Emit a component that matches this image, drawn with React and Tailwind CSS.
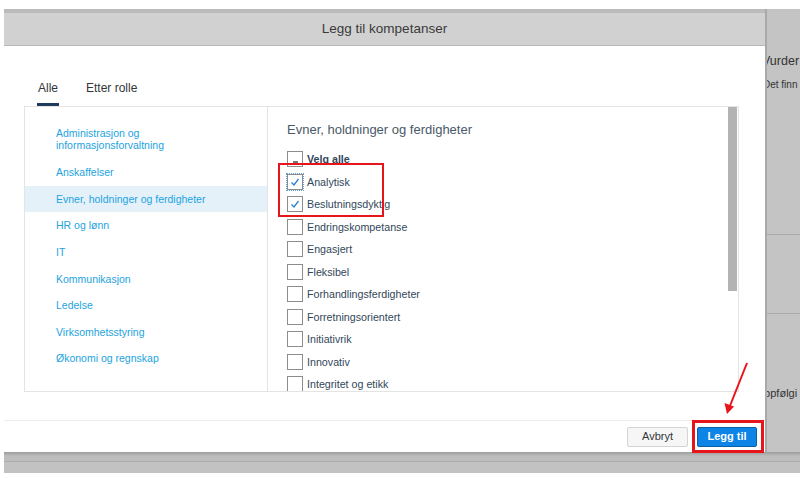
import React from "react";

const categories = [
  { label: ["Administrasjon og", "informasjonsforvaltning"] },
  { label: ["Anskaffelser"] },
  { label: ["Evner, holdninger og ferdigheter"], active: true },
  { label: ["HR og lønn"] },
  { label: ["IT"] },
  { label: ["Kommunikasjon"] },
  { label: ["Ledelse"] },
  { label: ["Virksomhetsstyring"] },
  { label: ["Økonomi og regnskap"] },
];

const skills = [
  { name: "Analytisk", checked: true, focus: true },
  { name: "Beslutningsdyktig", checked: true },
  { name: "Endringskompetanse" },
  { name: "Engasjert" },
  { name: "Fleksibel" },
  { name: "Forhandlingsferdigheter" },
  { name: "Forretningsorientert" },
  { name: "Initiativrik" },
  { name: "Innovativ" },
  { name: "Integritet og etikk" },
];

const Checkbox = ({ checked, focus, partial }) => (
  <div
    className={
      "w-[16px] h-[16px] shrink-0 border-[1.5px] border-[#8c8c8c] bg-white flex items-center justify-center " +
      (focus ? "outline-1 outline-dotted outline-[#5ea3dc]" : "")
    }
  >
    {checked && (
      <svg width="10" height="10" viewBox="0 0 10 10">
        <polyline points="1.5,5.5 4,8 8.5,2" fill="none" stroke="#2b7fd0" strokeWidth="1.3" />
      </svg>
    )}
    {partial && <div className="w-[5px] h-[1.5px] bg-[#777] mt-[5px]" />}
  </div>
);

export default function App() {
  return (
    <div className="w-[800px] h-[478px] bg-white relative overflow-hidden font-['Liberation_Sans',Arial,sans-serif]">
      <div className="ml-[4px] mt-[9px] h-[464px] bg-[#c4c4c4] flex flex-col">
        <div className="flex h-[443px]">
          {/* dialog */}
          <div className="w-[761px] flex flex-col">
            <div className="h-[4px] bg-[#bbbbbb]" />
            <div className="h-[439px] bg-white flex flex-col">
              <div className="h-[33px] bg-[#d1d1d1] border-b border-[#b8b8b8] flex items-center justify-center text-[13.5px] text-[#3a3a3a]">
                Legg til kompetanser
              </div>
              <div className="flex pl-[33px] pt-[34px] gap-[27px] text-[12px] leading-[16px] text-[#32363a]">
                <div className="pb-[7px] border-b-[3px] border-[#1e3a5c] px-[1px]">Alle</div>
                <div className="pb-[10px]">Etter rolle</div>
              </div>
              <div className="ml-[20px] w-[715px] h-[286px] border border-[#e4e4e4] flex">
                <div className="w-[243px] border-r border-[#e4e4e4] pt-[12px] text-[10.5px] text-[#22a3e0]">
                  {categories.map((c, i) => (
                    <div
                      key={i}
                      className={
                        "pl-[31px] flex flex-col justify-center leading-[12px] " +
                        (i === 0 ? "h-[40px]" : "h-[26.6px] ") +
                        (c.active ? "bg-[#e5f1f9]" : "")
                      }
                    >
                      {c.label.map((l) => (
                        <span key={l}>{l}</span>
                      ))}
                    </div>
                  ))}
                </div>
                <div className="flex-1 flex overflow-hidden">
                  <div className="flex-1 pl-[19px] pt-[14px] overflow-hidden">
                    <div className="text-[13px] leading-[18px] text-[#4a5968] mb-[9px]">
                      Evner, holdninger og ferdigheter
                    </div>
                    <div className="h-[22.5px] flex items-center gap-[4px] text-[10.7px] text-[#32475a] font-bold">
                      <Checkbox partial />
                      <span>Velg alle</span>
                    </div>
                    {skills.map((s) => (
                      <div key={s.name} className="h-[22.5px] flex items-center gap-[4px] text-[10.7px] text-[#32475a]">
                        <Checkbox checked={s.checked} focus={s.focus} />
                        <span>{s.name}</span>
                      </div>
                    ))}
                  </div>
                  <div className="w-[9px] mr-[1px]">
                    <div className="h-[184px] bg-[#b3b3b3]" />
                  </div>
                </div>
              </div>
              <div className="mt-[28px] border-t border-[#ececec] flex-1 flex items-center justify-end gap-[9px] pr-[8px]">
                <button className="w-[61px] h-[20px] rounded-[2px] border border-[#d4d4d4] bg-[#f6f6f6] text-[11px] text-[#32363a]">
                  Avbryt
                </button>
                <button className="w-[60px] h-[20px] rounded-[2px] border border-[#0b5fa5] bg-[#0d84e6] text-[11px] font-bold text-white">
                  Legg til
                </button>
              </div>
            </div>
          </div>
          {/* background page on the right */}
          <div className="flex-1 overflow-hidden border-l-2 border-[#a9a9a9] text-[#333]">
            <div className="-ml-[5px] mt-[44px] text-[12.5px] leading-[16px] whitespace-nowrap">Vurder</div>
            <div className="-ml-[4px] mt-[10px] text-[10px] leading-[12px] whitespace-nowrap">Det finn</div>
            <div className="mt-[143px] h-[80px] border-t border-b border-[#aaaaaa]" />
            <div className="-ml-[9px] mt-[72px] text-[11px] leading-[14px] whitespace-nowrap">oppfølgi</div>
          </div>
        </div>
        <div className="h-[4px] bg-gradient-to-b from-[#9c9c9c] to-[#bdbdbd]" />
        <div className="h-[6px] bg-[#bdbdbd] border-b border-[#acacac]" />
        <div className="flex-1 bg-[#c2c2c2]" />
      </div>

      {/* annotations */}
      <div className="absolute left-[278px] top-[163px] w-[106px] h-[54px] border-2 border-[#e8141b]" />
      <div className="absolute left-[692px] top-[420px] w-[72px] h-[33px] border-[3px] border-[#e8141b]" />
      <svg className="absolute left-[720px] top-[360px]" width="32" height="60" viewBox="0 0 32 60">
        <line x1="27" y1="3" x2="9.5" y2="47" stroke="#e8141b" strokeWidth="2" />
        <polygon points="7,54 4.5,43 14,46.5" fill="#e8141b" />
      </svg>
    </div>
  );
}
